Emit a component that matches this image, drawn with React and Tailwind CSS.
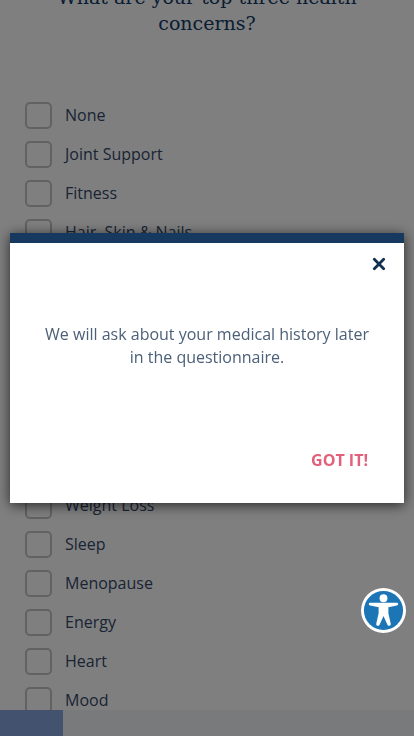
import { useState } from 'react'

const CONCERN_GROUPS = [
  ['None', 'Joint Support', 'Fitness', 'Hair, Skin & Nails'],
  ['Weight Loss', 'Sleep', 'Menopause', 'Energy', 'Heart', 'Mood'],
]

function ConcernOption({ label }) {
  return (
    <label className="flex items-center gap-[13px] text-base leading-[23px] text-[#34496a]">
      <input
        type="checkbox"
        name="concerns"
        value={label}
        className="size-[27px] shrink-0 appearance-none rounded-[5px] border-2 border-[#c4c4c4] checked:bg-[#84a6e0]"
      />
      {label}
    </label>
  )
}

function ProgressBar({ step, total }) {
  return (
    <div
      role="progressbar"
      aria-label="Questionnaire progress"
      aria-valuenow={step}
      aria-valuemax={total}
      className="fixed inset-x-0 bottom-0 h-[26px] bg-[#f3f5f9]"
    >
      <div className="h-full bg-[#84a4de]" style={{ width: `${(step / total) * 100}%` }} />
    </div>
  )
}

function NoticeDialog({ onClose }) {
  return (
    <div className="fixed inset-0 flex items-center justify-center bg-black/50 p-[10px]">
      <div
        role="dialog"
        aria-modal="true"
        aria-labelledby="notice-text"
        className="flex w-full flex-col border-t-[10px] border-[#17385f] bg-white pb-[31px] shadow-[0_2px_12px_rgba(0,0,0,0.7)]"
      >
        <div className="flex justify-end px-4 pt-3">
          <button type="button" aria-label="Close" onClick={onClose} className="p-[2px] text-[#12304f]">
            <svg
              viewBox="0 0 14 14"
              className="size-[14px]"
              fill="none"
              stroke="currentColor"
              strokeWidth="2.8"
              strokeLinecap="round"
            >
              <path d="M2.300 2.300 11.700 11.700M11.700 2.300 2.300 11.700" />
            </svg>
          </button>
        </div>
        <p id="notice-text" className="px-8 pt-[50px] text-center text-base leading-[23px] text-[#4c6078]">
          We will ask about your medical history later in the questionnaire.
        </p>
        <div className="flex justify-end px-9 pt-20">
          <button type="button" onClick={onClose} className="text-base leading-[23px] font-bold text-[#e2607a]">
            GOT IT!
          </button>
        </div>
      </div>
    </div>
  )
}

function AccessibilityButton() {
  return (
    <button type="button" aria-label="Accessibility options" className="fixed right-2 bottom-[103px]">
      <svg viewBox="0 0 46 46" className="size-[45px]">
        <circle cx="23" cy="23" r="23" fill="#fff" />
        <circle cx="23" cy="23" r="20" fill="#1c75b4" />
        <circle cx="23" cy="10.500" r="4" fill="#fff" />
        <path
          d="M9.500 15h27c1.900 0 1.900 2.500.2 2.900L28 19.600v6.200l2.400 10.700c.5 2.200-2.600 3-3.400 1L23 28.500l-4 9c-.8 2-3.900 1.200-3.400-1L18 25.800v-6.200l-8.700-1.700C7.600 17.500 7.600 15 9.500 15z"
          fill="#fff"
        />
      </svg>
    </button>
  )
}

export default function App() {
  const [noticeOpen, setNoticeOpen] = useState(true)

  return (
    <div className="h-screen overflow-hidden bg-white font-['Open_Sans',sans-serif]">
      <main className="-mt-4 px-[25px]">
        <h1 className="text-center font-['DejaVu_Serif',serif] text-[19px] leading-[26px] text-[#123a66]">
          What are your top three health concerns?
        </h1>
        <div className="flex flex-col gap-[246px] pt-[66px]">
          {CONCERN_GROUPS.map((labels) => (
            <div key={labels[0]} className="flex flex-col gap-3">
              {labels.map((label) => (
                <ConcernOption key={label} label={label} />
              ))}
            </div>
          ))}
        </div>
      </main>
      <ProgressBar step={5} total={33} />
      {noticeOpen && <NoticeDialog onClose={() => setNoticeOpen(false)} />}
      <AccessibilityButton />
    </div>
  )
}
